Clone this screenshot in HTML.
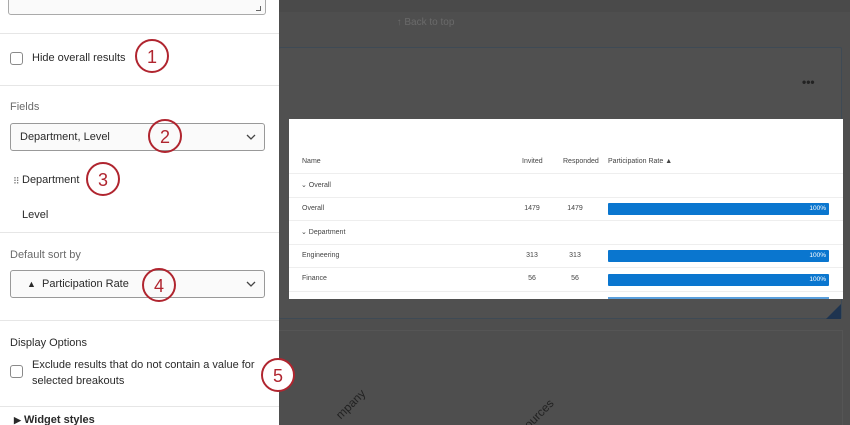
<!DOCTYPE html>
<html><head><style>
*{margin:0;padding:0;box-sizing:border-box}
html,body{width:850px;height:425px;overflow:hidden}
body{background:#4e4e4e;font-family:"Liberation Sans",sans-serif;position:relative}
.abs{position:absolute}
#left{left:0;top:0;width:279px;height:425px;background:#fff;overflow:hidden}
.hr{position:absolute;left:0;width:279px;height:1px;background:#e6e6e6}
.t{position:absolute;font-size:11px;line-height:13px;color:#2a2a2a;white-space:nowrap}
.lbl{color:#6a6a6a}
.cb{position:absolute;width:13px;height:13px;border:1px solid #8a8a8a;border-radius:3px}
.sel{position:absolute;left:10px;width:255px;height:28px;border:1px solid #999;border-radius:3px;background:#fafafa}
.chev{position:absolute;right:8px;top:8px}
.circ{position:absolute;width:34px;height:34px;border:2.5px solid #b0252f;border-radius:50%;color:#b0252f;font-size:18px;display:flex;align-items:center;justify-content:center;padding-top:2px}
.tbl{left:289px;top:119px;width:554px;height:180px;background:#fff}
.tt{position:absolute;font-size:7px;color:#444;white-space:nowrap}
.c{transform:translateX(-50%)}
.row{position:absolute;left:0;width:554px;height:1px;background:#eee}
.bar{position:absolute;left:319px;width:221px;height:12px;background:#0a76cf;border-radius:1px;color:#fff;font-size:6.5px;text-align:right;padding-right:3px;line-height:12px}
</style></head><body>
<div class="abs" style="left:279px;top:0;width:571px;height:12px;background:#4a4a4a"></div>
<div class="abs" style="left:393px;top:14px;width:65px;height:18px;color:#6a6a6a;font-size:10px;line-height:18px;text-align:center">↑ Back to top</div>
<div class="abs" style="left:279px;top:47px;width:563px;height:272px;border:1px solid #3e4a55;border-left:none;border-radius:2px;background:#505050"></div>
<div class="abs" style="left:802px;top:75px;color:#222;font-size:12px;font-weight:bold">•••</div>
<div class="abs" style="left:826px;top:304px;width:0;height:0;border-left:15px solid transparent;border-bottom:15px solid #1e3450"></div>
<div class="abs" style="left:279px;top:330px;width:571px;height:95px;overflow:hidden">
 <div class="abs" style="left:0;top:0;width:564px;height:100px;border:1px solid #555;border-left:none"></div>
 <div class="abs" style="left:54px;top:82px;color:#222;font-size:12px;transform:rotate(-45deg);transform-origin:left top">mpany</div>
 <div class="abs" style="left:123px;top:104px;color:#222;font-size:12px;transform:rotate(-45deg);transform-origin:left top">ng</div>
 <div class="abs" style="left:238px;top:96px;color:#222;font-size:12px;transform:rotate(-45deg);transform-origin:left top">sources</div>
</div>

<div class="abs tbl">
 <div class="tt" style="left:13px;top:39px">Name</div>
 <div class="tt" style="left:233px;top:39px">Invited</div>
 <div class="tt" style="left:274px;top:39px">Responded</div>
 <div class="tt" style="left:319px;top:39px">Participation Rate ▲</div>
 <div class="row" style="top:54px"></div>
 <div class="tt" style="left:12px;top:62px">⌄ Overall</div>
 <div class="row" style="top:78px"></div>
 <div class="tt" style="left:13px;top:86px">Overall</div>
 <div class="tt c" style="left:243px;top:86px">1479</div>
 <div class="tt c" style="left:286px;top:86px">1479</div>
 <div class="bar" style="top:84px">100%</div>
 <div class="row" style="top:101px"></div>
 <div class="tt" style="left:12px;top:109px">⌄ Department</div>
 <div class="row" style="top:125px"></div>
 <div class="tt" style="left:13px;top:133px">Engineering</div>
 <div class="tt c" style="left:243px;top:133px">313</div>
 <div class="tt c" style="left:286px;top:133px">313</div>
 <div class="bar" style="top:131px">100%</div>
 <div class="row" style="top:148px"></div>
 <div class="tt" style="left:13px;top:156px">Finance</div>
 <div class="tt c" style="left:243px;top:156px">56</div>
 <div class="tt c" style="left:286px;top:156px">56</div>
 <div class="bar" style="top:155px">100%</div>
 <div class="row" style="top:172px"></div>
 <div class="abs" style="left:319px;top:178px;width:221px;height:2px;background:#5a9fdc"></div>
</div>

<div class="abs" id="left">
 <div class="abs" style="left:8px;top:-5px;width:258px;height:20px;border:1px solid #aaa;border-radius:3px;background:#fafafa"></div>
 <div class="abs" style="left:256px;top:6px;width:5px;height:5px;border-right:1px solid #666;border-bottom:1px solid #666"></div>
 <div class="hr" style="top:33px"></div>
 <div class="cb" style="left:10px;top:52px"></div>
 <div class="t" style="left:32px;top:52px">Hide overall results</div>
 <div class="hr" style="top:85px"></div>
 <div class="t lbl" style="left:10px;top:101px">Fields</div>
 <div class="sel" style="top:123px"><div class="t" style="left:9px;top:7px">Department, Level</div>
  <svg class="chev" width="10" height="10" viewBox="0 0 10 10"><path d="M1 3l4 4 4-4" fill="none" stroke="#444" stroke-width="1.3"/></svg></div>
 <div class="t" style="left:13px;top:175px;font-size:9px;color:#777">⠿</div>
 <div class="t" style="left:22px;top:174px">Department</div>
 <div class="t" style="left:22px;top:209px">Level</div>
 <div class="hr" style="top:232px"></div>
 <div class="t lbl" style="left:10px;top:249px">Default sort by</div>
 <div class="sel" style="top:270px"><div class="t" style="left:16px;top:7px"><span style="font-size:9px">▲</span>&nbsp;&nbsp;Participation Rate</div>
  <svg class="chev" width="10" height="10" viewBox="0 0 10 10"><path d="M1 3l4 4 4-4" fill="none" stroke="#444" stroke-width="1.3"/></svg></div>
 <div class="hr" style="top:320px"></div>
 <div class="t" style="left:10px;top:337px">Display Options</div>
 <div class="cb" style="left:10px;top:365px"></div>
 <div class="t" style="left:32px;top:357px;line-height:16px">Exclude results that do not contain a value for<br>selected breakouts</div>
 <div class="hr" style="top:406px"></div>
 <div class="t" style="left:14px;top:415px;font-weight:bold;line-height:10px"><span style="font-size:9px">▶</span>&nbsp;Widget styles</div>
</div>

<div class="circ" style="left:135px;top:39px">1</div>
<div class="circ" style="left:148px;top:119px">2</div>
<div class="circ" style="left:86px;top:162px">3</div>
<div class="circ" style="left:142px;top:268px">4</div>
<div class="circ" style="left:261px;top:358px;background:#fff">5</div>
</body></html>
